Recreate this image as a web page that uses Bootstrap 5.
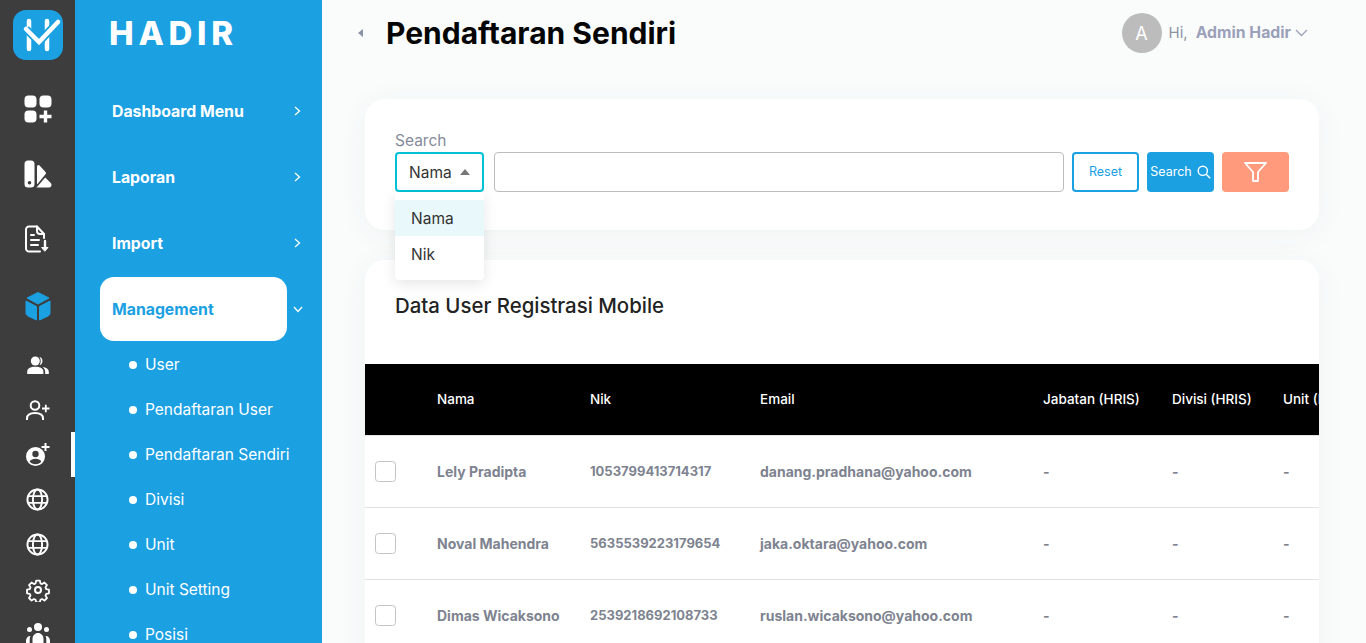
<!DOCTYPE html>
<html lang="en">
<head>
  <meta charset="UTF-8" />
  <meta name="viewport" content="width=device-width, initial-scale=1.0" />
  <title>Pendaftaran Sendiri</title>
  <link href="https://cdn.jsdelivr.net/npm/bootstrap@5.3.0/dist/css/bootstrap.min.css" rel="stylesheet">
  <style>
    body { font-family: "Inter", "Liberation Sans", sans-serif; background: #fafcfc; height: 643px; overflow: hidden; }
    .shell { height: 643px; overflow: hidden; }

    .rail { width: 75px; flex: none; background: #3d3d3d; }
    .rail-logo { height: 76px; padding: 10px 0 0 13px; }
    .rail-item { height: 65px; width: 75px; }
    .rail-item.tall { height: 71px; }
    .rail-item.short { height: 45px; }
    .rail-item.active { border-right: 4px solid #fff; padding-left: 4px; }

    .side { width: 247px; flex: none; background: #1ba0e2; color: #fff; }
    .side-logo { height: 78px; padding: 15px 0 0 34px; font-size: 33px; line-height: 36px; font-weight: 800; letter-spacing: 4.7px; }
    .side-link { height: 66px; padding-left: 37px; padding-right: 21px; font-size: 15.8px; font-weight: 700; }
    .side-link span { padding-top: 1px; }
    .side-link.open { padding-left: 25px; padding-right: 19px; }
    .side-pill { background: #fff; color: #1ba0e2; width: 187px; height: 64px; border-radius: 14px; padding-left: 12px; }
    .side-sub { height: 45px; padding-left: 54px; font-size: 15.5px; gap: 8px; }
    .side-sub::before { content: ""; width: 8px; height: 8px; border-radius: 50%; background: #fff; }

    .main { min-width: 0; padding: 0 47px 0 43px; }
    .topbar { height: 66px; }
    .back-tri { width: 0; height: 0; border: 4.500px solid transparent; border-right: 5px solid #8a93a8; border-left: 0; margin: 0 23px 0 -7px; }
    .page-title { font-size: 30px; font-weight: 700; color: #050505; margin: 0; }
    .avatar { width: 40px; height: 40px; border-radius: 50%; background: #bcbcbc; color: #fff; font-size: 18px; }
    .hi { color: #8d93a3; font-size: 15px; margin-left: 7px; margin-right: 8px; }
    .who { color: #9aa1b9; font-size: 15.8px; font-weight: 700; margin-right: 4px; }
    .user-box { margin-right: 11px; }

    .panel { background: #fff; border-radius: 20px; box-shadow: 0 4px 30px rgba(60, 70, 80, .05); }
    .search-panel { height: 131px; margin-top: 33px; padding: 32px 30px 0; position: relative; }
    .search-label { color: #858b9b; font-size: 15.5px; line-height: 20px; height: 21px; }
    .fake-select { width: 89px; height: 40px; border: 2px solid #00c2d4; border-radius: 4px; padding: 1px 0 0 12px; color: #333; font-size: 15.5px; margin-right: 10px; }
    .fake-select::after { content: ""; border: 5.500px solid transparent; border-bottom: 6px solid #777; border-top: 0; margin-left: 8px; margin-top: -2px; }
    .text-box { width: 570px; height: 40px; border: 1px solid #bdbdbd; border-radius: 4px; margin-right: 8px; }
    .act { width: 67px; height: 40px; padding: 0; border-radius: 4px; font-size: 12.5px; }
    .act-reset { border: 2px solid #1ba0e2; color: #1ba0e2; background: #fff; margin-right: 8px; }
    .act-search { border: 0; color: #fff; background: #1ba0e2; margin-right: 8px; gap: 5px; white-space: nowrap; }
    .act-filter { border: 0; background: #ff9a7d; }
    .pick-menu { position: absolute; left: 30px; top: 93px; width: 89px; min-width: 0; padding: 8px 0; margin: 0; border: 0; border-radius: 4px; box-shadow: 0 4px 14px rgba(0, 0, 0, .1); z-index: 5; }
    .pick-menu .dropdown-item { height: 36px; padding: 1px 16px 0; line-height: 36px; font-size: 15.5px; color: #333; }
    .pick-menu .picked { background: #e9f8fa; }

    .data-panel { margin-top: 30px; height: 460px; overflow: hidden; }
    .data-title { height: 104px; padding: 32px 30px 0; font-size: 20.4px; line-height: 28px; font-weight: 500; color: #222; margin: 0; }
    .grid-table { table-layout: fixed; width: 1100px; margin: 0; }
    .grid-table th { background: #000; color: #fff; font-size: 13.5px; font-weight: 500; height: 71px; padding: 0 10px; vertical-align: middle; white-space: nowrap; border-bottom: 1px solid #e3e3e3; }
    .grid-table td { height: 72px; padding: 0 10px; vertical-align: middle; color: #7e8390; font-size: 14px; font-weight: 700; white-space: nowrap; border-bottom: 1px solid #e3e3e3; }
    .grid-table td.num-cell { font-size: 13px; padding-top: 2px; }
    .tick { width: 21px; height: 21px; border: 1px solid #c4c4c4; border-radius: 4px; background: #fff; margin-top: 0; display: block; }
  </style>
</head>
<body>
  <div class="shell d-flex">

    <!-- icon rail -->
    <div class="rail">
      <div class="rail-logo">
        <svg width="50" height="50" viewBox="0 0 50 50">
          <rect width="50" height="50" rx="13" fill="#1ba0e2"/>
          <path d="M16 11v28M34 11v28" stroke="#fff" stroke-width="4.500" stroke-linecap="round" fill="none"/>
          <path d="M13 19l13 13 19-20" stroke="#1ba0e2" stroke-width="8" fill="none"/>
          <path d="M13 19l13 13 19-20" stroke="#fff" stroke-width="4.500" stroke-linecap="round" fill="none"/>
        </svg>
      </div>
      <div class="rail-item d-flex align-items-center justify-content-center">
        <svg width="28" height="28" viewBox="0 0 28 28" fill="#fff">
          <rect x="0.500" y="0.500" width="12" height="12" rx="4"/><rect x="15.500" y="0.500" width="12" height="12" rx="4"/><rect x="0.500" y="15.500" width="12" height="12" rx="4"/>
          <path d="M19.800 15.500h3.400v4.300h4.300v3.400h-4.300v4.300h-3.400v-4.300h-4.300v-3.400h4.300z"/>
        </svg>
      </div>
      <div class="rail-item d-flex align-items-center justify-content-center">
        <svg width="28" height="28" viewBox="0 0 28 28" fill="#fff">
          <path fill-rule="evenodd" d="M4 0.500h3a3.500 3.500 0 0 1 3.500 3.500v20a3.500 3.500 0 0 1-3.500 3.500H4A3.500 3.500 0 0 1 0.500 24V4A3.500 3.500 0 0 1 4 0.500zm1.500 20.500a1.800 1.800 0 1 0 0 3.600 1.800 1.800 0 0 0 0-3.600z"/>
          <path d="M13 7c0-1.800 1.500-2.500 2.800-1.300l5.700 6.300c.6.700.6 1.500 0 2.200L13.500 24c-.2.200-.5.100-.5-.2z"/>
          <path d="M12.500 27.500l8.700-10 5.300 5.200c.7.700 1 1.400 1 2.300 0 1.500-1 2.500-2.500 2.500z"/>
        </svg>
      </div>
      <div class="rail-item d-flex align-items-center justify-content-center">
        <svg width="26" height="28" viewBox="0 0 26 28" fill="none" stroke="#fff" stroke-width="2" stroke-linecap="round" stroke-linejoin="round">
          <path d="M19 13V9l-7-7.500H4A3 3 0 0 0 1 4.500v19a3 3 0 0 0 3 3h11"/>
          <path d="M12 1.500V6a3 3 0 0 0 3 3h4"/>
          <path d="M6 10h3M6 15h8M6 20h7"/>
          <path d="M20 16v8" stroke-width="2.400"/>
          <path d="M17 22.500h6l-3 3.500z" fill="#fff" stroke-width="1"/>
        </svg>
      </div>
      <div class="rail-item tall d-flex align-items-center justify-content-center">
        <svg width="26" height="29" viewBox="0 0 26 29" fill="#1ba0e2">
          <path d="M13 0.500l11 5.500-11 6L2 6z" stroke="#1ba0e2" stroke-linejoin="round"/>
          <path d="M1 9l10.500 5.500V28L3 24c-1.300-.7-2-1.500-2-3z" stroke="#1ba0e2" stroke-linejoin="round"/>
          <path d="M25 9l-10.500 5.500V28l8.500-4c1.300-.7 2-1.500 2-3z" stroke="#1ba0e2" stroke-linejoin="round"/>
        </svg>
      </div>
      <div class="rail-item short d-flex align-items-center justify-content-center">
        <svg width="22" height="18" viewBox="0 0 24 20" fill="#fff">
          <circle cx="9" cy="5.500" r="5"/>
          <path d="M0 20v-2.500C0 14 3.500 12 9 12s9 2 9 5.500V20z"/>
          <path d="M13.500 0.800a5 5 0 0 1 0 9.500c1-1.200 1.500-3 1.500-4.800s-.5-3.500-1.500-4.700z"/>
          <path d="M17 12.300c4 .5 7 2.200 7 5.200V20h-4v-2.500c0-2-1-3.800-3-5.200z"/>
        </svg>
      </div>
      <div class="rail-item short d-flex align-items-center justify-content-center">
        <svg width="24" height="20" viewBox="0 0 24 20" fill="none" stroke="#fff" stroke-width="2">
          <circle cx="9" cy="5.500" r="4.300"/>
          <path d="M1 20v-1.500C1 15 4 13 9 13s8 2 8 5.500V20"/>
          <path d="M16 8.500h7.500M19.800 4.800v7.400" stroke-width="1.800"/>
        </svg>
      </div>
      <div class="rail-item short active d-flex align-items-center justify-content-center">
        <svg width="24" height="24" viewBox="0 0 24 24" fill="#fff">
          <path fill-rule="evenodd" d="M9.500 4a9.500 9.500 0 1 1 0 19 9.500 9.500 0 0 1 0-19zm0 3.800a3.200 3.200 0 1 0 0 6.400 3.200 3.200 0 0 0 0-6.400zM3.700 18.500c1.300 1.800 3.400 2.800 5.800 2.800s4.500-1 5.800-2.800c-1-1.700-3.200-2.700-5.800-2.700s-4.800 1-5.800 2.700z"/>
          <path d="M18.500 0h2v3h3v2h-3v3h-2V5h-3V3h3z"/>
        </svg>
      </div>
      <div class="rail-item short d-flex align-items-center justify-content-center">
        <svg width="23" height="23" viewBox="0 0 24 24" fill="none" stroke="#fff" stroke-width="2">
          <circle cx="12" cy="12" r="10.500"/><ellipse cx="12" cy="12" rx="4.800" ry="10.500"/><path d="M2 8.500h20M2 15.500h20"/>
        </svg>
      </div>
      <div class="rail-item short d-flex align-items-center justify-content-center">
        <svg width="23" height="23" viewBox="0 0 24 24" fill="none" stroke="#fff" stroke-width="2">
          <circle cx="12" cy="12" r="10.500"/><ellipse cx="12" cy="12" rx="4.800" ry="10.500"/><path d="M2 8.500h20M2 15.500h20"/>
        </svg>
      </div>
      <div class="rail-item short d-flex align-items-center justify-content-center">
        <svg width="24" height="24" viewBox="0 0 24 24" fill="none" stroke="#fff" stroke-width="2" stroke-linejoin="round">
          <circle cx="12" cy="12" r="3"/>
          <path d="M10 1.500h4l.7 3.100 1.800.8 2.700-1.700 2.800 2.800-1.700 2.700.8 1.800 3.100.7v4l-3.100.7-.8 1.800 1.700 2.700-2.800 2.800-2.700-1.700-1.800.8-.7 3.100h-4l-.7-3.100-1.800-.8-2.700 1.700-2.800-2.800 1.700-2.700-.8-1.800-3.100-.7v-4l3.100-.7.800-1.800-1.700-2.700 2.800-2.800 2.700 1.700 1.800-.8z" transform="translate(1.200 1.200) scale(.9)"/>
        </svg>
      </div>
      <div class="rail-item short d-flex align-items-center justify-content-center">
        <svg width="24" height="24" viewBox="0 0 24 24" fill="#fff">
          <circle cx="12" cy="4" r="4"/><circle cx="3.500" cy="6.500" r="2.500"/><circle cx="20.500" cy="6.500" r="2.500"/>
          <path d="M6.500 16c0-3.500 2.500-6 5.500-6s5.500 2.500 5.500 6v8h-11z"/>
          <path d="M0 24v-6c0-3 1.500-5 4.500-5-.5 1-.8 2-.8 3.500V24zM24 24v-6c0-3-1.500-5-4.500-5 .5 1 .8 2 .8 3.500V24z"/>
        </svg>
      </div>
    </div>

    <!-- menu -->
    <div class="side">
      <div class="side-logo">HADIR</div>
      <div class="side-link d-flex align-items-center justify-content-between">
        <span>Dashboard Menu</span>
        <svg width="7" height="10" viewBox="0 0 7 10" fill="none" stroke="#fff" stroke-width="1.300"><path d="M1 1l4.500 4L1 9"/></svg>
      </div>
      <div class="side-link d-flex align-items-center justify-content-between">
        <span>Laporan</span>
        <svg width="7" height="10" viewBox="0 0 7 10" fill="none" stroke="#fff" stroke-width="1.300"><path d="M1 1l4.500 4L1 9"/></svg>
      </div>
      <div class="side-link d-flex align-items-center justify-content-between">
        <span>Import</span>
        <svg width="7" height="10" viewBox="0 0 7 10" fill="none" stroke="#fff" stroke-width="1.300"><path d="M1 1l4.500 4L1 9"/></svg>
      </div>
      <div class="side-link open d-flex align-items-center justify-content-between">
        <span class="side-pill d-flex align-items-center">Management</span>
        <svg width="10" height="7" viewBox="0 0 10 7" fill="none" stroke="#fff" stroke-width="1.300"><path d="M1 1l4 4.500L9 1"/></svg>
      </div>
      <div class="side-sub d-flex align-items-center">User</div>
      <div class="side-sub d-flex align-items-center">Pendaftaran User</div>
      <div class="side-sub d-flex align-items-center">Pendaftaran Sendiri</div>
      <div class="side-sub d-flex align-items-center">Divisi</div>
      <div class="side-sub d-flex align-items-center">Unit</div>
      <div class="side-sub d-flex align-items-center">Unit Setting</div>
      <div class="side-sub d-flex align-items-center">Posisi</div>
    </div>

    <!-- page -->
    <div class="main flex-grow-1">
      <div class="topbar d-flex align-items-center">
        <span class="back-tri"></span>
        <h1 class="page-title">Pendaftaran Sendiri</h1>
        <div class="user-box ms-auto d-flex align-items-center">
          <span class="avatar d-flex align-items-center justify-content-center">A</span>
          <span class="hi">Hi,</span>
          <span class="who">Admin Hadir</span>
          <svg width="13" height="8" viewBox="0 0 13 8" fill="none" stroke="#9aa1b9" stroke-width="1.300"><path d="M1 1l5.500 5.500L12 1"/></svg>
        </div>
      </div>

      <div class="panel search-panel">
        <div class="search-label">Search</div>
        <div class="d-flex">
          <div class="fake-select d-flex align-items-center">Nama</div>
          <div class="text-box"></div>
          <button class="btn act act-reset">Reset</button>
          <button class="btn act act-search d-flex align-items-center justify-content-center">Search
            <svg width="14" height="14" viewBox="0 0 14 14" fill="none" stroke="#fff" stroke-width="1.400"><circle cx="5.800" cy="5.800" r="4.600"/><path d="M9.200 9.200l4 4"/></svg>
          </button>
          <button class="btn act act-filter d-flex align-items-center justify-content-center">
            <svg width="23" height="20" viewBox="0 0 23 20" fill="none" stroke="#fff" stroke-width="1.800" stroke-linejoin="round"><path d="M1 1h21l-8 9v9h-5v-9z"/></svg>
          </button>
        </div>
        <div class="dropdown-menu show pick-menu">
          <div class="dropdown-item picked">Nama</div>
          <div class="dropdown-item">Nik</div>
        </div>
      </div>

      <div class="panel data-panel">
        <h5 class="data-title">Data User Registrasi Mobile</h5>
        <table class="table grid-table">
          <colgroup>
            <col style="width:62px"><col style="width:153px"><col style="width:170px"><col style="width:283px"><col style="width:129px"><col style="width:111px"><col style="width:192px">
          </colgroup>
          <thead>
            <tr><th></th><th>Nama</th><th>Nik</th><th>Email</th><th>Jabatan (HRIS)</th><th>Divisi (HRIS)</th><th>Unit (HRIS)</th></tr>
          </thead>
          <tbody>
            <tr><td><input class="form-check-input tick" type="checkbox"></td><td>Lely Pradipta</td><td class="num-cell">1053799413714317</td><td>danang.pradhana@yahoo.com</td><td>-</td><td>-</td><td>-</td></tr>
            <tr><td><input class="form-check-input tick" type="checkbox"></td><td>Noval Mahendra</td><td class="num-cell">5635539223179654</td><td>jaka.oktara@yahoo.com</td><td>-</td><td>-</td><td>-</td></tr>
            <tr><td><input class="form-check-input tick" type="checkbox"></td><td>Dimas Wicaksono</td><td class="num-cell">2539218692108733</td><td>ruslan.wicaksono@yahoo.com</td><td>-</td><td>-</td><td>-</td></tr>
          </tbody>
        </table>
      </div>
    </div>
  </div>
  <script src="https://cdn.jsdelivr.net/npm/bootstrap@5.3.0/dist/js/bootstrap.bundle.min.js"></script>
</body>
</html>
